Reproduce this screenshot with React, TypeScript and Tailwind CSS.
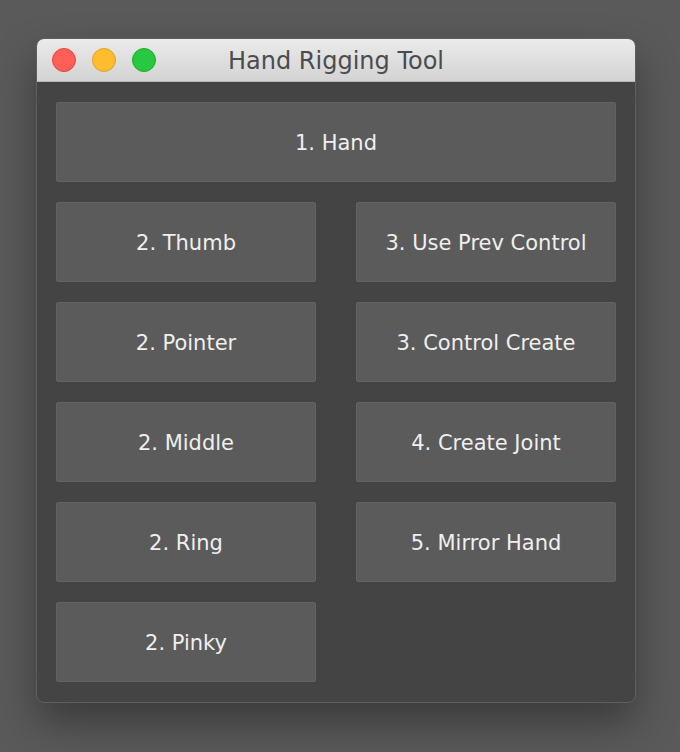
export default function App() {
  const rows: [string, string | null][] = [
    ['2. Thumb', '3. Use Prev Control'],
    ['2. Pointer', '3. Control Create'],
    ['2. Middle', '4. Create Joint'],
    ['2. Ring', '5. Mirror Hand'],
    ['2. Pinky', null],
  ];

  const btn =
    'h-20 flex items-center justify-center rounded-[2px] border border-[#636363] bg-[#5b5b5b] pt-[3px] text-[21px] text-[#efefef]';

  return (
    <div
      className="min-h-[752px] w-[680px] bg-[#5a5a5a] pt-[38px] pl-[36px]"
      style={{ fontFamily: '"DejaVu Sans", "Liberation Sans", sans-serif' }}
    >
      <div className="w-[600px] overflow-hidden rounded-[8px] border border-[#5f5f5f] bg-[#444444] shadow-[0_20px_40px_rgba(0,0,0,0.35)]">
        {/* title bar */}
        <div className="relative flex h-[43px] items-center border-b border-[#b8b8b8] bg-gradient-to-b from-[#ebebeb] to-[#d3d3d3]">
          <div className="flex gap-4 pl-[15px]">
            <span className="h-6 w-6 rounded-full border border-[#e0443e] bg-[#fe5f57]" />
            <span className="h-6 w-6 rounded-full border border-[#dea123] bg-[#febc2e]" />
            <span className="h-6 w-6 rounded-full border border-[#1aab29] bg-[#28c840]" />
          </div>
          <div className="absolute inset-0 flex items-center justify-center pt-[2px] text-[24px] text-[#4c4c4c]">
            Hand Rigging Tool
          </div>
        </div>

        {/* buttons */}
        <div className="flex flex-col gap-5 px-[19px] py-5">
          <div className={btn}>1. Hand</div>
          {rows.map(([left, right], i) => (
            <div key={i} className="grid grid-cols-2 gap-10">
              <div className={btn}>{left}</div>
              {right ? <div className={btn}>{right}</div> : <div />}
            </div>
          ))}
        </div>
      </div>
    </div>
  );
}
